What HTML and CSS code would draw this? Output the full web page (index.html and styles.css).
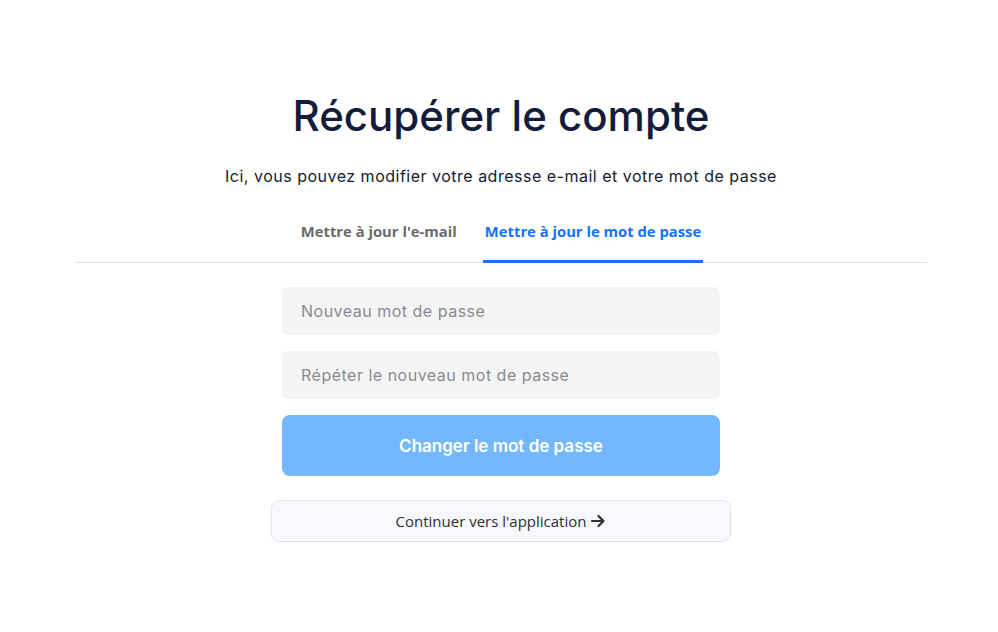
FILE: index.html
```html
<!DOCTYPE html>
<html lang="fr">
<head>
  <meta charset="UTF-8">
  <title>Récupérer le compte</title>
  <link rel="stylesheet" href="styles.css">
</head>
<body>

  <div class="page">
    <h1 class="title">Récupérer le compte</h1>
    <p class="subtitle">Ici, vous pouvez modifier votre adresse e-mail et votre mot de passe</p>

    <div class="tabs">
      <button class="tab">Mettre à jour l'e-mail</button>
      <button class="tab active">Mettre à jour le mot de passe</button>
    </div>

    <form class="form">
      <input class="field" type="password" placeholder="Nouveau mot de passe">
      <input class="field" type="password" placeholder="Répéter le nouveau mot de passe">
      <button class="submit" type="button">Changer le mot de passe</button>
    </form>

    <a class="continue" href="#">
      Continuer vers l'application
      <svg width="16" height="16" viewBox="0 0 16 16" fill="none" stroke="currentColor" stroke-width="2.2" stroke-linecap="round" stroke-linejoin="round">
        <path d="M2 8h11M8.5 3l5 5-5 5"/>
      </svg>
    </a>
  </div>

</body>
</html>
```

FILE: styles.css
```css
body {
  margin: 0;
  background: #fff;
  font-family: "Inter", "Noto Sans", sans-serif;
  color: #131a3a;
}
.page {
  width: 852px;
  margin: 0 auto;
  padding-top: 88px;
  display: flex;
  flex-direction: column;
  align-items: center;
  transform: translateX(2px);
}
.title {
  margin: 0;
  font-size: 42px;
  font-weight: 500;
  line-height: 56px;
  color: #141c3c;
}
.subtitle {
  margin: 20px 0 0;
  font-size: 16px;
  letter-spacing: 0.5px;
  line-height: 24px;
  color: #141a33;
}
.tabs {
  align-self: stretch;
  display: flex;
  justify-content: center;
  gap: 24px;
  margin-top: 21px;
  border-bottom: 1px solid #dedfee;
}
.tab {
  background: none;
  border: none;
  padding: 12px 2px 19px;
  font-family: "Open Sans", "Noto Sans", sans-serif;
  font-size: 14.8px;
  font-weight: 700;
  color: #6b6b6b;
  border-bottom: 3px solid transparent;
  margin-bottom: -1px;
  cursor: pointer;
}
.tab.active {
  color: #1473f6;
  border-bottom-color: #1473f6;
}
.form {
  width: 438px;
  display: flex;
  flex-direction: column;
  gap: 16px;
  margin-top: 24px;
}
.field {
  height: 48px;
  box-sizing: border-box;
  padding: 0 19px;
  border: none;
  outline: none;
  border-radius: 6px;
  background: #f4f4f4;
  font-family: "Inter", "Noto Sans", sans-serif;
  font-size: 16px;
  letter-spacing: 0.5px;
  color: #333;
}
.field::placeholder {
  color: #8a8a91;
}
.submit {
  height: 61px;
  border: none;
  border-radius: 8px;
  background: #74b7fe;
  color: #fff;
  font-family: "Inter", "Noto Sans", sans-serif;
  font-size: 17px;
  font-weight: 600;
  cursor: pointer;
}
.continue {
  margin-top: 24px;
  width: 460px;
  height: 42px;
  box-sizing: border-box;
  display: flex;
  align-items: center;
  justify-content: center;
  gap: 4px;
  border: 1px solid #e2e4ee;
  border-radius: 8px;
  background: #f7f8fb;
  color: #2c2f38;
  font-family: "Open Sans", "Noto Sans", sans-serif;
  font-size: 15px;
  text-decoration: none;
}
```
